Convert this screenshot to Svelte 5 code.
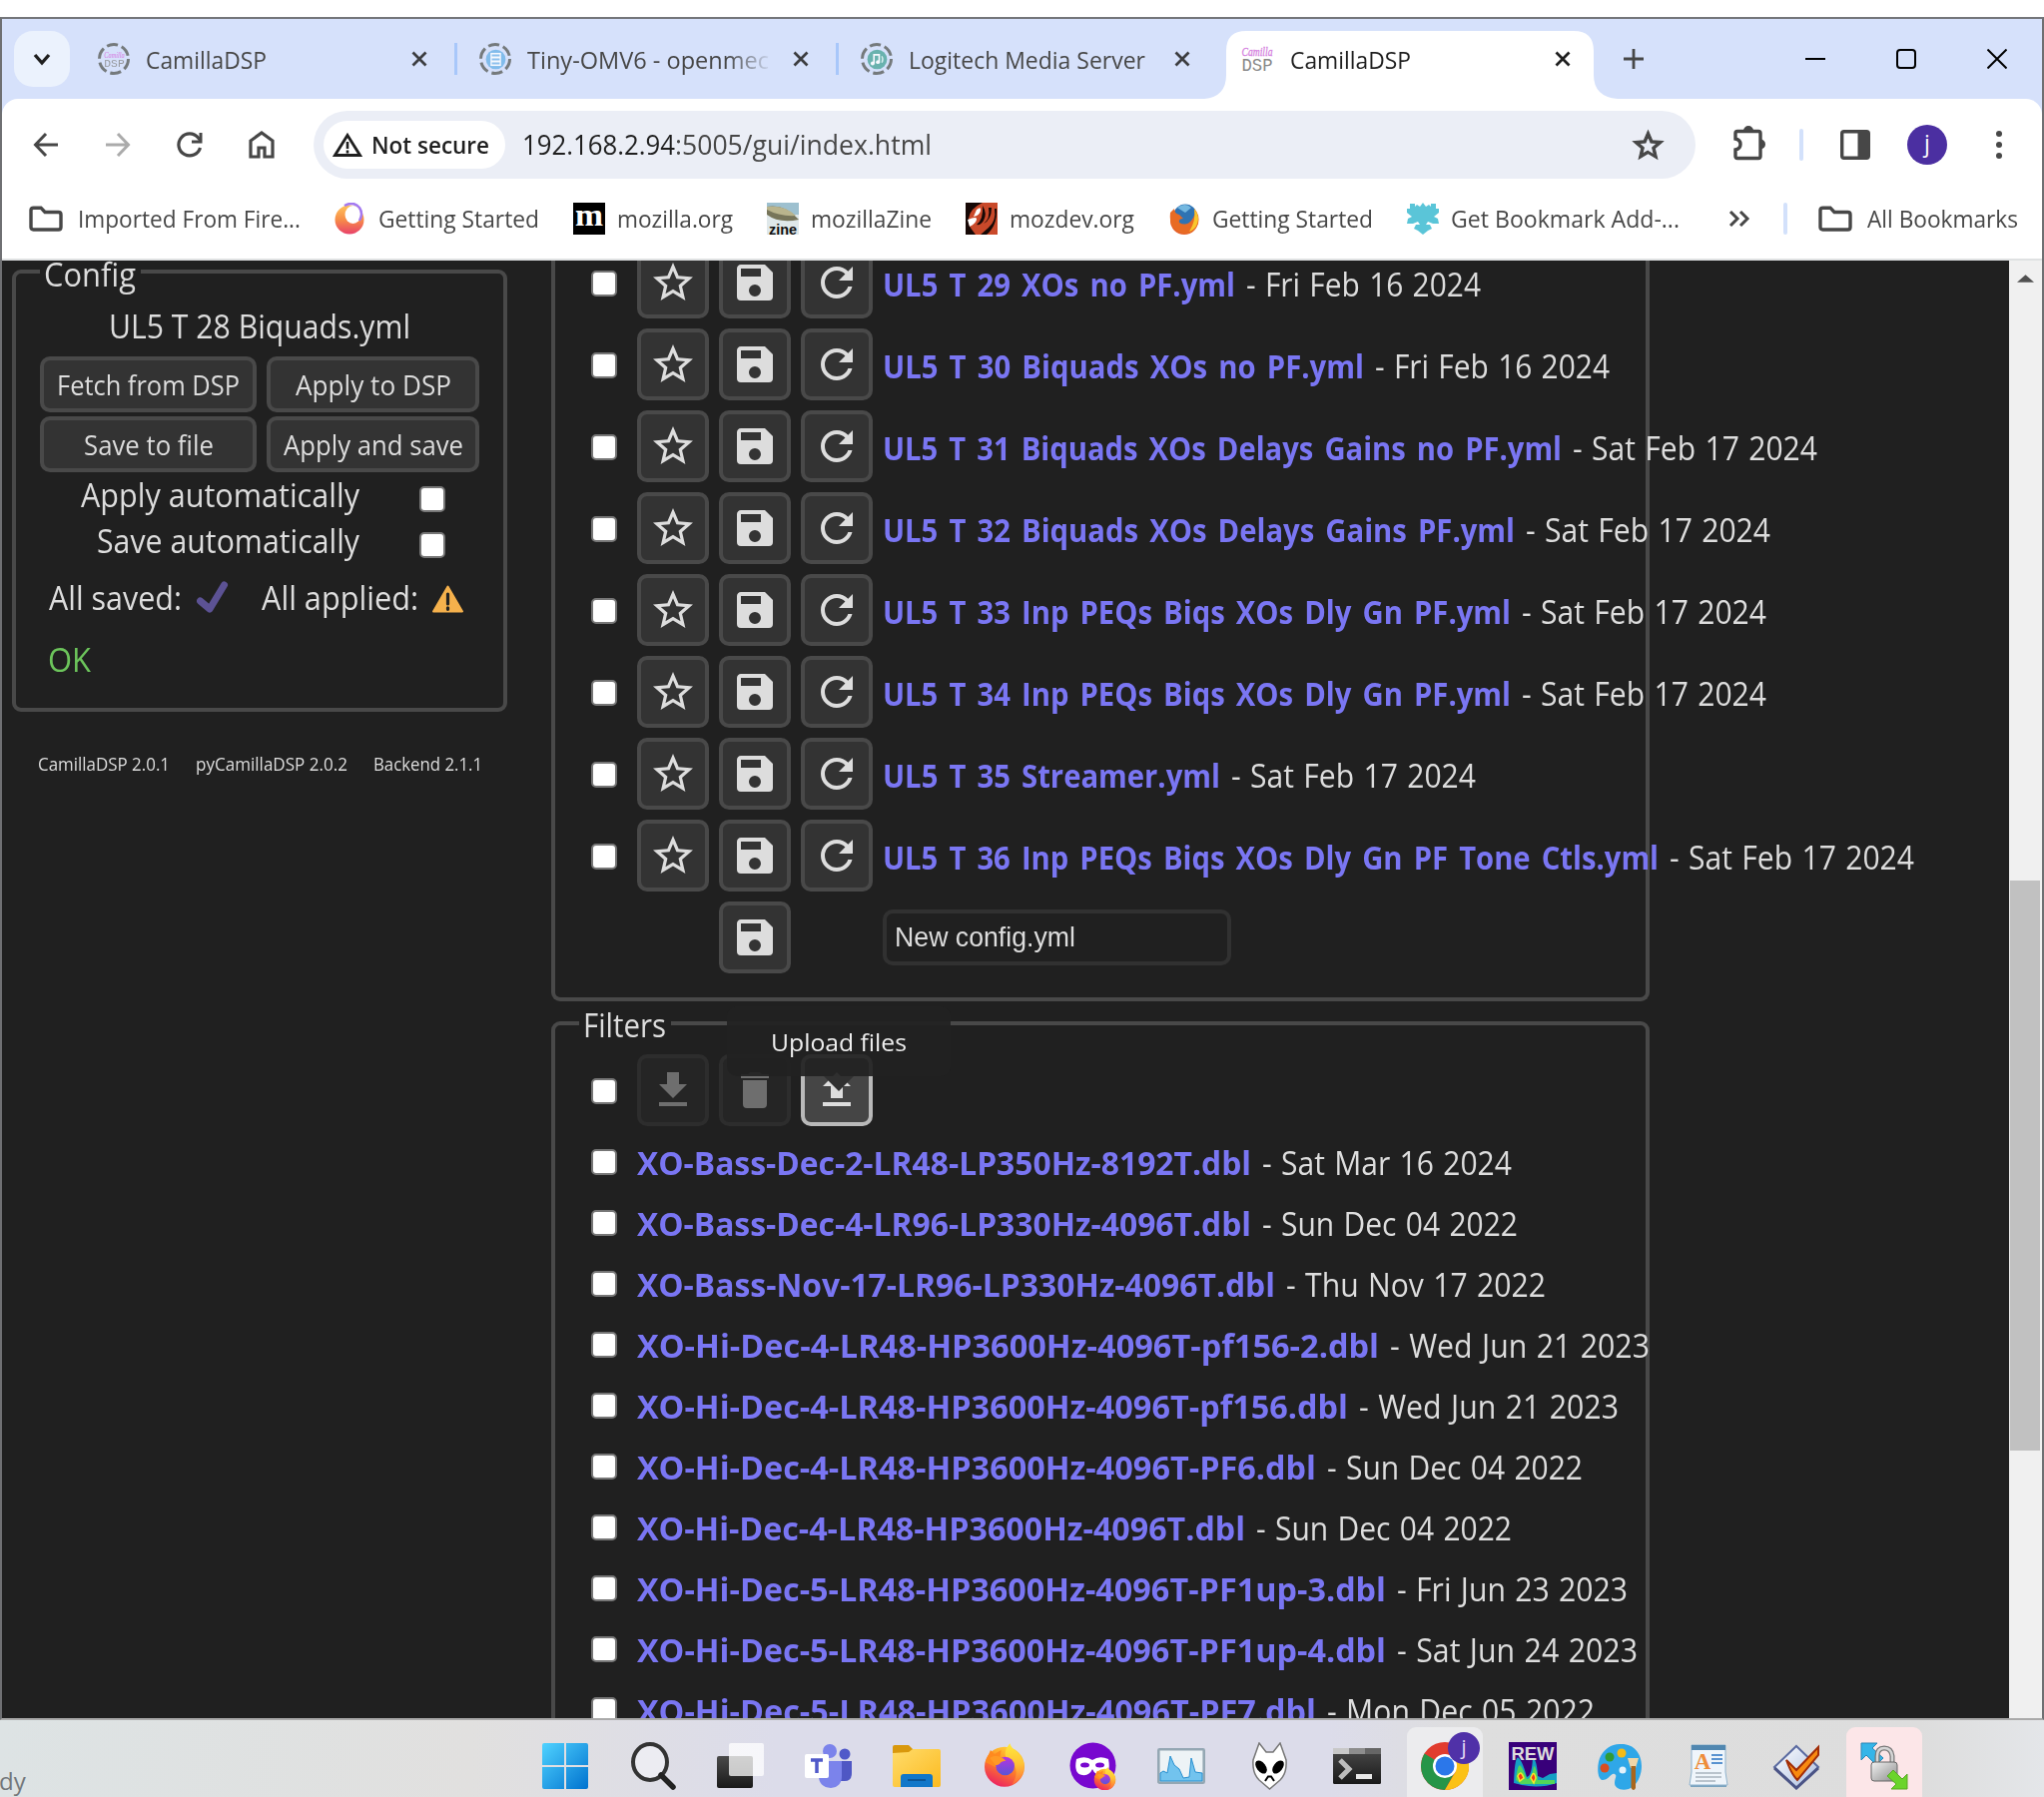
<script>
  // Scales a label horizontally so that it fills its column width.
  function fit(node, width) {
    const natural = node.getBoundingClientRect().width;
    node.style.transform = `scaleX(${width / natural})`;
  }

  const tabs = [
    { title: 'CamillaDSP', w: 121, icon: 'camilla', busy: true },
    { title: 'Tiny-OMV6 - openmec', w: 242, icon: 'omv', busy: true },
    { title: 'Logitech Media Server', w: 237, icon: 'lms', busy: true },
    { title: 'CamillaDSP', w: 121, icon: 'camilla', active: true }
  ];

  const bookmarks = [
    { title: 'Imported From Fire...', w: 223, icon: 'folder' },
    { title: 'Getting Started', w: 161, icon: 'ring' },
    { title: 'mozilla.org', w: 116, icon: 'm' },
    { title: 'mozillaZine', w: 121, icon: 'zine' },
    { title: 'mozdev.org', w: 125, icon: 'dev' },
    { title: 'Getting Started', w: 161, icon: 'fox' },
    { title: 'Get Bookmark Add-...', w: 229, icon: 'snow' }
  ];

  const configs = [
    { name: 'UL5 T 29 XOs no PF.yml', w: 353, date: 'Fri Feb 16 2024', d: 235 },
    { name: 'UL5 T 30 Biquads XOs no PF.yml', w: 482, date: 'Fri Feb 16 2024', d: 235 },
    { name: 'UL5 T 31 Biquads XOs Delays Gains no PF.yml', w: 680, date: 'Sat Feb 17 2024', d: 245 },
    { name: 'UL5 T 32 Biquads XOs Delays Gains PF.yml', w: 633, date: 'Sat Feb 17 2024', d: 245 },
    { name: 'UL5 T 33 Inp PEQs Biqs XOs Dly Gn PF.yml', w: 629, date: 'Sat Feb 17 2024', d: 245 },
    { name: 'UL5 T 34 Inp PEQs Biqs XOs Dly Gn PF.yml', w: 629, date: 'Sat Feb 17 2024', d: 245 },
    { name: 'UL5 T 35 Streamer.yml', w: 338, date: 'Sat Feb 17 2024', d: 245 },
    { name: 'UL5 T 36 Inp PEQs Biqs XOs Dly Gn PF Tone Ctls.yml', w: 777, date: 'Sat Feb 17 2024', d: 245 }
  ];

  const filters = [
    { name: 'XO-Bass-Dec-2-LR48-LP350Hz-8192T.dbl', w: 615, date: 'Sat Mar 16 2024', d: 250 },
    { name: 'XO-Bass-Dec-4-LR96-LP330Hz-4096T.dbl', w: 615, date: 'Sun Dec 04 2022', d: 256 },
    { name: 'XO-Bass-Nov-17-LR96-LP330Hz-4096T.dbl', w: 639, date: 'Thu Nov 17 2022', d: 260 },
    { name: 'XO-Hi-Dec-4-LR48-HP3600Hz-4096T-pf156-2.dbl', w: 743, date: 'Wed Jun 21 2023', d: 260 },
    { name: 'XO-Hi-Dec-4-LR48-HP3600Hz-4096T-pf156.dbl', w: 712, date: 'Wed Jun 21 2023', d: 260 },
    { name: 'XO-Hi-Dec-4-LR48-HP3600Hz-4096T-PF6.dbl', w: 680, date: 'Sun Dec 04 2022', d: 256 },
    { name: 'XO-Hi-Dec-4-LR48-HP3600Hz-4096T.dbl', w: 609, date: 'Sun Dec 04 2022', d: 256 },
    { name: 'XO-Hi-Dec-5-LR48-HP3600Hz-4096T-PF1up-3.dbl', w: 750, date: 'Fri Jun 23 2023', d: 231 },
    { name: 'XO-Hi-Dec-5-LR48-HP3600Hz-4096T-PF1up-4.dbl', w: 750, date: 'Sat Jun 24 2023', d: 241 },
    { name: 'XO-Hi-Dec-5-LR48-HP3600Hz-4096T-PF7.dbl', w: 680, date: 'Mon Dec 05 2022', d: 268 }
  ];

  const paths = {
    star: 'M12,15.39L8.24,17.66L9.23,13.38L5.91,10.5L10.29,10.13L12,6.09L13.71,10.13L18.09,10.5L14.77,13.38L15.76,17.66M22,9.24L14.81,8.63L12,2L9.19,8.63L2,9.24L7.45,13.97L5.82,21L12,17.27L18.18,21L16.54,13.97L22,9.24Z',
    save: 'M15,9H5V5H15M12,19A3,3 0 0,1 9,16A3,3 0 0,1 12,13A3,3 0 0,1 15,16A3,3 0 0,1 12,19M17,3H5C3.89,3 3,3.9 3,5V19A2,2 0 0,0 5,21H19A2,2 0 0,0 21,19V7L17,3Z',
    reload: 'M17.65,6.35C16.2,4.9 14.21,4 12,4A8,8 0 0,0 4,12A8,8 0 0,0 12,20C15.73,20 18.84,17.45 19.73,14H17.65C16.83,16.33 14.61,18 12,18A6,6 0 0,1 6,12A6,6 0 0,1 12,6C13.66,6 15.14,6.69 16.22,7.78L13,11H20V4L17.65,6.35Z',
    download: 'M5,20H19V18H5M19,9H15V3H9V9H5L12,16L19,9Z',
    trash: 'M19,4H15.5L14.5,3H9.5L8.5,4H5V6H19M6,19A2,2 0 0,0 8,21H16A2,2 0 0,0 18,19V7H6V19Z',
    upload: 'M9,16V10H5L12,3L19,10H15V16H9M5,20V18H19V20H5Z'
  };
</script>

{#snippet t(text, w, cls = '')}
  <span class="t {cls}" style:width="{w}px"><span class="in" use:fit={w}>{text}</span></span>
{/snippet}

{#snippet glyph(name)}
  <svg class="glyph" viewBox="0 0 24 24"><path d={paths[name]} fill="currentColor" /></svg>
{/snippet}

{#snippet closeIcon()}
  <svg class="close" viewBox="0 0 16 16"><path d="M1.5 1.5l13 13M14.5 1.5l-13 13" stroke="currentColor" stroke-width="2.8" /></svg>
{/snippet}

{#snippet folderIcon()}
  <svg class="folder" viewBox="0 0 34 26"><path d="M2 4.5Q2 2.2 4.5 2.2H12l4 4.3h13.500Q32 6.500 32 9v12.500q0 2.500-2.500 2.500h-25Q2 24 2 21.500z" fill="none" stroke="#474747" stroke-width="3.400" /></svg>
{/snippet}

{#snippet foxArt()}
  <circle cx="16" cy="17.500" r="15" fill="url(#foxBody)" />
  <path d="M20 0c1 5 9 7 10.500 15 1 8-4 14-9 16 5-7 4-15-2-18-5-3-3-9 .500-13z" fill="url(#foxFlame)" />
  <path d="M1.500 14l4-9 3 3 5-3-1 6 5 3-8 4z" fill="#ff8a1f" />
  <circle cx="16.500" cy="17" r="7" fill="url(#foxGlobe)" />
  <path d="M5 11c4-3 9-1 12 2-5 0-4 4-8 3z" fill="#ff9a25" />
{/snippet}

{#snippet site(icon)}
  <svg class="site" viewBox="0 0 32 32">
    {#if icon === 'camilla'}
      <text x="16" y="13" text-anchor="middle" font-size="12" font-style="italic" font-family="Liberation Serif, serif" textLength="31" lengthAdjust="spacingAndGlyphs" fill="#d57fe0" stroke="#d57fe0" stroke-width=".3">Camilla</text>
      <text x="16" y="27.500" text-anchor="middle" font-size="18" font-family="Liberation Mono, monospace" textLength="31" lengthAdjust="spacingAndGlyphs" fill="#888">DSP</text>
    {:else if icon === 'omv'}
      <circle cx="16" cy="16" r="15" fill="#6db3e8" /><rect x="8" y="6" width="16" height="20" fill="#fff" />
      <path d="M10 10h12M10 16h12M10 22h12" stroke="#7ab9ea" stroke-width="3" />
    {:else if icon === 'lms'}
      <circle cx="16" cy="16" r="15" fill="#4fa79c" />
      <path d="M11 22V9h8v11" stroke="#fff" stroke-width="2.500" fill="none" /><circle cx="9" cy="22" r="3" fill="#fff" /><circle cx="17" cy="20" r="3" fill="#fff" />
      <path d="M23 11q3 5 0 10" stroke="#d7f0ec" stroke-width="2" fill="none" />
    {:else if icon === 'ring'}
      <ellipse cx="15" cy="17" rx="14.500" ry="14.500" fill="url(#ringGrad)" /><ellipse cx="18.500" cy="12" rx="8" ry="9" fill="#fff" />
      <path d="M10 3q9-5 15 2 4 6 0 13" fill="none" stroke="#a479f0" stroke-width="2.500" />
    {:else if icon === 'm'}
      <rect width="32" height="32" fill="#000" /><text x="16" y="23" text-anchor="middle" font-size="31" font-weight="700" font-family="Liberation Serif, serif" fill="#fff" textLength="28" lengthAdjust="spacingAndGlyphs">m</text>
    {:else if icon === 'zine'}
      <rect width="32" height="32" fill="#dfe8ea" /><rect width="32" height="12" fill="#9dc0cf" />
      <path d="M0 4q18-3 32 13-20 4-32-5z" fill="#77755a" /><path d="M0 4q18-2 29 9-16 1-29-6z" fill="#b9b48d" />
      <text x="16" y="31.500" text-anchor="middle" font-size="14" font-weight="700" font-family="Liberation Sans, sans-serif" fill="#111" textLength="28" lengthAdjust="spacingAndGlyphs">zine</text>
    {:else if icon === 'dev'}
      <rect width="32" height="32" fill="#c9492a" /><path d="M0 0h17Q4 6 3 16q-1 6 4 12l3 4H0z" fill="#160806" />
      <path d="M11 7q5-4 4 1t-7 6zM2 17q10-4 9 0t-7 7z" fill="#fff" /><path d="M17 3q5 8 1 15-3 5-7 4 7-5 6-19zM23 5q2 11-5 16 8-4 8-16zM29 6q2 12-6 19l-8 7h6q11-9 10-26z" fill="#160806" />
    {:else if icon === 'fox'}
      <circle cx="16" cy="18" r="14" fill="#e4602a" /><circle cx="17" cy="13" r="11.500" fill="#2f73b3" /><path d="M9 5q8-6 14 0l-6 5z" fill="#74b8e0" />
      <path d="M2 10l4-4q0 5 5 6l4 4q-5 0-4 4 7 4 12-2 5-6 3-12 6 6 4 15-4 11-15 10Q0 27 2 10z" fill="#e86b24" /><path d="M26 6q6 8 3 15-2 6-8 8 7-11 5-23z" fill="#f9c72c" />
    {:else if icon === 'snow'}
      <path d="M16 0l3 4 3-2 2 2V1h5v5h3v4l-5 4 4 2 1 5h-6l-5-2-2 3h4l2 4-4 2-5 4-5-4-4-2 2-4h4l-2-3-5 2H0l1-5 4-2-5-4V6h3V1h5v3l2-2 3 2z" fill="#5ac5d8" />
    {/if}
  </svg>
{/snippet}

<svg class="defs" width="0" height="0">
  <defs>
    <linearGradient id="foxBody" x1=".8" y1="0" x2=".3" y2="1"><stop offset="0" stop-color="#ffe03a" /><stop offset=".5" stop-color="#ff8524" /><stop offset="1" stop-color="#ec1f63" /></linearGradient>
    <linearGradient id="foxFlame" x1="0" y1="0" x2="0" y2="1"><stop offset="0" stop-color="#ffe93c" /><stop offset=".5" stop-color="#ffc235" /><stop offset="1" stop-color="#ff6a3a" /></linearGradient>
    <linearGradient id="foxGlobe" x1="0" y1="0" x2="0" y2="1"><stop offset="0" stop-color="#b833e1" /><stop offset="1" stop-color="#5a55d6" /></linearGradient>
    <linearGradient id="ringGrad" x1="0" y1="0" x2="0" y2="1"><stop offset="0" stop-color="#ffc45c" /><stop offset=".5" stop-color="#f78d48" /><stop offset="1" stop-color="#e8416a" /></linearGradient>
    <linearGradient id="winBlue" x1="0" y1="0" x2="1" y2="1"><stop offset="0" stop-color="#50d3ff" /><stop offset="1" stop-color="#0072cf" /></linearGradient>
    <linearGradient id="yellow" x1="0" y1="0" x2="1" y2="1"><stop offset="0" stop-color="#ffdc6b" /><stop offset="1" stop-color="#fcba20" /></linearGradient>
    <linearGradient id="dark" x1="0" y1="0" x2="0" y2="1"><stop offset="0" stop-color="#4a4a4a" /><stop offset="1" stop-color="#191919" /></linearGradient>
    <linearGradient id="sheet" x1="0" y1="0" x2="1" y2="1"><stop offset="0" stop-color="#fff" /><stop offset="1" stop-color="#a9bce0" /></linearGradient>
    <linearGradient id="steel" x1="0" y1="0" x2="1" y2="1"><stop offset="0" stop-color="#f3f3f3" /><stop offset="1" stop-color="#8c8c8c" /></linearGradient>
  </defs>
</svg>

<div class="screen">
  <div class="window">
    <div class="tabstrip">
      <div class="search-tabs"><svg viewBox="0 0 18 14"><path d="M2 3l7 8 7-8" fill="none" stroke="#1f1f1f" stroke-width="3.400" /></svg></div>
      {#each tabs as tab, i}
        <div class="tab" class:active={tab.active} class:sep={i < 2}>
          {#if tab.active}
            <svg class="tabshape" viewBox="0 0 414 68"><path d="M0 68q22-2 22-24V20Q22 0 42 0h328q20 0 20 20v24q0 22 24 24z" fill="#fff" /></svg>
          {/if}
          <div class="favicon" class:busy={tab.busy}>
            {#if tab.busy}<svg class="dash" viewBox="0 0 32 32"><circle cx="16" cy="16" r="14.500" fill="none" stroke="#757a7c" stroke-width="3" stroke-dasharray="11.200 4" /></svg>{/if}
            {@render site(tab.icon)}
          </div>
          <div class="title" class:faded={i === 1}>{@render t(tab.title, tab.w)}</div>
          {@render closeIcon()}
        </div>
      {/each}
      <svg class="plus" viewBox="0 0 20 20"><path d="M10 0v20M0 10h20" stroke="#474747" stroke-width="2.800" /></svg>
      <div class="controls">
        <svg viewBox="0 0 20 20"><path d="M0 10h20" stroke="#000" stroke-width="2" /></svg>
        <svg viewBox="0 0 20 20"><rect x="1" y="1" width="18" height="18" rx="3" fill="none" stroke="#000" stroke-width="2" /></svg>
        <svg viewBox="0 0 20 20"><path d="M.5 .5l19 19M19.500 .5l-19 19" stroke="#000" stroke-width="2" /></svg>
      </div>
    </div>

    <div class="toolbar">
      <svg class="nav" viewBox="0 0 28 28"><path d="M26 14H4M14 3L3.500 14 14 25" fill="none" stroke="#474747" stroke-width="3" /></svg>
      <svg class="nav" viewBox="0 0 28 28"><path d="M2 14h22M14 3l10.500 11L14 25" fill="none" stroke="#ababab" stroke-width="3" /></svg>
      <svg class="nav" viewBox="0 0 28 28"><path d="M24.500 17A11 11 0 1 1 22.500 7L25 10" fill="none" stroke="#474747" stroke-width="3.200" /><path d="M26.500 2v10.500H16V9.500h7.500V2z" fill="#474747" /></svg>
      <svg class="nav home" viewBox="0 0 28 30"><path d="M3 27V11l11-8 11 8v16h-8v-9h-6v9z" fill="none" stroke="#474747" stroke-width="3.200" /></svg>
      <div class="omnibox">
        <div class="chip">
          <svg viewBox="0 0 30 25"><path d="M15 3.500L27.500 23.500h-25z" fill="none" stroke="#1f1f1f" stroke-width="2.800" /><path d="M15 10v7M15 18.500v3" stroke="#1f1f1f" stroke-width="2.600" /></svg>
          {@render t('Not secure', 118, 'semi')}
        </div>
        <div class="url">{@render t('192.168.2.94', 153, 'host')}{@render t(':5005/gui/index.html', 257)}</div>
        <svg class="bmstar" viewBox="1 1 22 21"><path d={paths.star} fill="#474747" stroke="#474747" stroke-width=".7" /></svg>
      </div>
      <svg class="ext" viewBox="0 0 34 36"><path d="M4 8.500q0-2 2-2h21q2 0 2 2v23q0 2-2 2H6q-2 0-2-2V25q5-1 5-5.500T4 14z" fill="none" stroke="#474747" stroke-width="3.400" /><path d="M12 6a5 5 0 0 1 10 0zM29 14.500a5 5 0 0 1 0 10z" fill="#474747" /></svg>
      <i class="bar"></i>
      <svg class="panel" viewBox="0 0 30 30"><rect x="1.700" y="1.700" width="26.600" height="26.600" rx="2" fill="none" stroke="#474747" stroke-width="3.400" /><path d="M17.500 2H28v26H17.500z" fill="#474747" /></svg>
      <div class="avatar">j</div>
      <svg class="dots" viewBox="0 0 8 30"><circle cx="4" cy="4" r="3" /><circle cx="4" cy="15" r="3" /><circle cx="4" cy="26" r="3" /></svg>
    </div>

    <div class="bookmarks">
      {#each bookmarks as b}
        <div class="bm">
          {#if b.icon === 'folder'}{@render folderIcon()}{:else}{@render site(b.icon)}{/if}
          {@render t(b.title, b.w)}
        </div>
      {/each}
      <svg class="more" viewBox="0 0 22 16"><path d="M2 1l7 7-7 7M12 1l7 7-7 7" fill="none" stroke="#474747" stroke-width="3" /></svg>
      <i class="bar"></i>
      <div class="bm">{@render folderIcon()}{@render t('All Bookmarks', 151)}</div>
    </div>

    <div class="page">
      <aside>
        <section class="box config">
          <div class="legend">{@render t('Config', 92)}</div>
          <div class="current">{@render t('UL5 T 28 Biquads.yml', 302)}</div>
          <div class="actions">
            <button>{@render t('Fetch from DSP', 183)}</button>
            <button>{@render t('Apply to DSP', 156)}</button>
            <button>{@render t('Save to file', 130)}</button>
            <button>{@render t('Apply and save', 180)}</button>
          </div>
          <div class="auto">{@render t('Apply automatically', 279)}<i class="check"></i></div>
          <div class="auto">{@render t('Save automatically', 263)}<i class="check"></i></div>
          <div class="status">
            {@render t('All saved:', 133)}
            <svg class="tick" viewBox="0 0 32 32"><path d="M3.500 20L13 28 27.500 4" fill="none" stroke="#5c5294" stroke-width="7" stroke-linecap="round" stroke-linejoin="round" /></svg>
            {@render t('All applied:', 157)}
            <svg class="warn" viewBox="0 0 32 28"><path d="M16 1.500L30.500 26.500h-29z" fill="#f5b14c" stroke="#f5b14c" stroke-width="2" stroke-linejoin="round" /><path d="M16 9v10M16 22.800v1.500" stroke="#222" stroke-width="3.200" stroke-linecap="round" /></svg>
          </div>
          <div class="ok">{@render t('OK', 43)}</div>
        </section>
        <footer>{@render t('CamillaDSP 2.0.1', 132)}{@render t('pyCamillaDSP 2.0.2', 152)}{@render t('Backend 2.1.1', 109)}</footer>
      </aside>

      <main>
        <section class="box files">
          {#each configs as c}
            <div class="row">
              <i class="check"></i>
              <button class="sq">{@render glyph('star')}</button>
              <button class="sq">{@render glyph('save')}</button>
              <button class="sq">{@render glyph('reload')}</button>
              <div class="entry">{@render t(c.name, c.w, 'name')}{@render t('- ' + c.date, c.d)}</div>
            </div>
          {/each}
          <div class="row">
            <span></span><span></span>
            <button class="sq">{@render glyph('save')}</button>
            <span></span>
            <div class="input">{@render t('New config.yml', 181)}</div>
          </div>
        </section>

        <section class="box filters">
          <div class="legend">{@render t('Filters', 83)}</div>
          <div class="row head">
            <i class="check"></i>
            <button class="sq off">{@render glyph('download')}</button>
            <button class="sq off">{@render glyph('trash')}</button>
            <button class="sq hot">{@render glyph('upload')}
              <div class="tip">{@render t('Upload files', 136)}</div>
            </button>
          </div>
          <div class="list">
            {#each filters as f}
              <div class="frow"><i class="check"></i>{@render t(f.name, f.w, 'name')}{@render t('- ' + f.date, f.d)}</div>
            {/each}
          </div>
        </section>
      </main>

      <div class="scrollbar">
        <svg viewBox="0 0 18 8"><path d="M0 8l9-8 9 8z" fill="#505050" /></svg>
        <div class="thumb"></div>
      </div>
    </div>
  </div>

  <div class="taskbar">
    <span class="partial">dy</span>
    <div class="apps">
      <div class="app"><svg viewBox="0 0 48 48"><path d="M3 1h20v22H1V3q0-2 2-2zM25 1h20q2 0 2 2v20H25zM1 25h22v22H3q-2 0-2-2zM25 25h22v20q0 2-2 2H25z" fill="url(#winBlue)" /></svg></div>
      <div class="app"><svg viewBox="0 0 48 48"><ellipse cx="21" cy="20" rx="17" ry="18" fill="#ececf2" stroke="#333" stroke-width="4" /><path d="M32 33l12 12" stroke="#222" stroke-width="5.500" stroke-linecap="round" /></svg></div>
      <div class="app"><svg viewBox="0 0 48 48"><rect x="0" y="14" width="36" height="32" rx="2" fill="url(#dark)" /><rect x="12" y="1" width="35" height="33" rx="2" fill="#fff" fill-opacity=".75" /></svg></div>
      <div class="app"><svg viewBox="0 0 48 48"><circle cx="40" cy="12" r="5.500" fill="#5059c9" /><path d="M32 19h15v12q0 8-7 8h-8z" fill="#4f57c4" /><circle cx="25" cy="9" r="7" fill="#7b83eb" /><path d="M14 19h23v15q0 11-11 12-12-1-12-12z" fill="#7b83eb" /><rect x="0" y="12" width="24" height="24" rx="2" fill="#fff" /><path d="M6 18h12M12 18v13" stroke="#5059c9" stroke-width="3.500" /></svg></div>
      <div class="app"><svg viewBox="0 0 48 48"><path d="M0 5q0-2 2-2h14l4 4v10H0z" fill="#d9980c" /><path d="M0 11l16-1 4-3h26q2 0 2 2v34q0 2-2 2H2q-2 0-2-2z" fill="url(#yellow)" /><path d="M8 45V35q0-3 3-3h26q3 0 3 3v10z" fill="#1177c9" /><path d="M15 38h18" stroke="#0b5596" stroke-width="2" /></svg></div>
      <div class="app"><svg viewBox="-2 -1 36 36">{@render foxArt()}</svg></div>
      <div class="app"><svg viewBox="0 0 48 48"><circle cx="23.500" cy="23.500" r="23" fill="#7808cf" /><path d="M7 17q9-4 16 1 7-5 16-1 3 15-6 16-7 1-10-6-3 7-10 6-9-1-6-16z" fill="#fff" /><ellipse cx="15.500" cy="23" rx="4.500" ry="2.500" fill="#7808cf" /><ellipse cx="30.500" cy="23" rx="4.500" ry="2.500" fill="#7808cf" /><g transform="translate(24 25) scale(.72)">{@render foxArt()}</g></svg></div>
      <div class="app"><svg viewBox="0 0 48 48"><rect x="1.300" y="7.300" width="45.400" height="33.400" rx="1" fill="#edf3f6" stroke="#94a7b3" stroke-width="2.600" /><path d="M3 31l3-2 4 2 3-17 4 9 5 4 4 9 6-1 2-19 4 14 7 1v8H3z" fill="#72c3ee" stroke="#278fd0" /></svg></div>
      <div class="app"><svg viewBox="0 0 48 48"><path d="M14 1l7 9h7l7-9 6 17q1 13-6 20l-10.500 9L14 38q-7-7-6-20z" fill="#fff" stroke="#777" stroke-width="1.500" /><ellipse cx="16" cy="25" rx="4.500" ry="7.500" transform="rotate(-38 16 25)" fill="#000" /><ellipse cx="33" cy="25" rx="4.500" ry="7.500" transform="rotate(38 33 25)" fill="#000" /><path d="M20 39l3-4.500h3l3 4.500" stroke="#000" stroke-width="2" fill="none" /></svg></div>
      <div class="app"><svg viewBox="0 0 48 48"><rect y="6" width="48" height="36" rx="1.500" fill="url(#dark)" /><path d="M0 6h16v6H0z" fill="#c8c8c8" /><path d="M16 6h16v6H16z" fill="#8d8d8d" /><path d="M32 6h16v6H32z" fill="#666" /><path d="M7 18l9 9-9 9" fill="none" stroke="#bdbdbd" stroke-width="5" /><path d="M23 34.500h16" stroke="#e8e8e8" stroke-width="5" /></svg></div>
      <div class="app lit"><svg viewBox="0 0 48 48"><circle cx="24" cy="24" r="24" fill="#e13c2e" /><path d="M24 24L3.500 11.500A24 24 0 0 0 24 48l10-18z" fill="#269548" /><path d="M24 13h21.500A24 24 0 0 1 24 48l10.500-18z" fill="#fbc116" /><circle cx="24" cy="24" r="12" fill="#fff" /><circle cx="24" cy="24" r="9.500" fill="#2b77ea" /></svg><span class="badge">j</span></div>
      <div class="app"><svg viewBox="0 0 48 48"><rect width="48" height="48" fill="#38007a" /><path d="M5 41q1-29 5-25t8 19q5-1 6-19 4 1 5 18l5 2 7-4 7-1v10q-20 7-43 0z" fill="#159fc4" /><path d="M7 38q2-18 5-14t6 13q5 0 7-13 3 1 4 14h17v4H12z" fill="#53d65a" /><path d="M9 34q3-7 6 2l-4 3zM22 36q3-9 5 0l-2 5z" fill="#f13a1a" stroke="#f6e72b" stroke-width="1.500" /><text x="24" y="17.500" text-anchor="middle" font-family="Liberation Sans, sans-serif" font-size="18" font-weight="700" fill="#ddd" textLength="43" lengthAdjust="spacingAndGlyphs">REW</text></svg></div>
      <div class="app"><svg viewBox="0 0 48 48"><path d="M23 2c14-1 22 9 22 22 0 10-5 20-13 23-8 2-14-1-14-6s3-7 0-9-6 6-12 6C0 38 0 21 4 14 8 7 14 2 23 2z" fill="#2fa7e8" /><circle cx="13" cy="15" r="4.500" fill="#2f9b35" /><circle cx="25" cy="11" r="4.500" fill="#f5bb16" /><circle cx="8" cy="26" r="4.500" fill="#d84e22" /><circle cx="26" cy="28" r="3.500" fill="#e3f2fb" /><path d="M31 16h11l-3 10h-5z" fill="#efd6a8" /><path d="M34.500 24h4.500v22q-2 4-4.500 0z" fill="#a9661d" /></svg></div>
      <div class="app"><svg viewBox="0 0 48 48"><path d="M6 40h36v5H6z" fill="#7aa3bf" /><path d="M7 3h34v27l2 13H5l2-13z" fill="#eff5fb" stroke="#8fb2cc" /><path d="M7 3h34v5H7z" fill="#5187b0" /><text x="18" y="27" text-anchor="middle" font-family="Liberation Serif, serif" font-size="23" font-weight="700" fill="#ee8d3a">A</text><path d="M27 13h11M27 17h11M27 21h11" stroke="#5a93d0" stroke-width="2" /><path d="M11 31h26M11 35h26M11 39h20" stroke="#a9b4be" stroke-width="1.500" /></svg></div>
      <div class="app"><svg viewBox="0 0 48 48"><path d="M24 4l22 21-22 21L2 25z" fill="url(#sheet)" stroke="#5a6aa0" stroke-width="2" /><path d="M2 26l22 20 22-20" fill="none" stroke="#4b5486" stroke-width="3" /><path d="M14 18l10 10L46 5v8L25 38q-6-6-11-20z" fill="#f88a10" stroke="#a12d08" stroke-width="2" /></svg></div>
      <div class="app alert"><svg viewBox="0 0 48 48"><path d="M1 1h16l-5 5 11 10-7 7L6 13l-5 5z" fill="#35b5e8" stroke="#2a86b5" /><path d="M17 23v-9q0-8 7-8t8 8v9" fill="none" stroke="#777" stroke-width="5" /><path d="M17 23v-9q0-8 7-8t8 8v9" fill="none" stroke="#d5d5d5" stroke-width="2.500" /><rect x="11" y="20" width="26" height="19" rx="3" fill="url(#steel)" stroke="#666" /><path d="M47 47H31l5-5-9-8 6-6 9 9 5-5z" fill="#6bd42b" stroke="#58a823" /></svg></div>
    </div>
  </div>
</div>

<style>
  :global(body) { background: #fff; overflow: hidden; }
  .defs { position: absolute; }
  .screen { width: 2047px; height: 1800px; overflow: hidden; box-sizing: border-box; padding-top: 17px; font-family: 'Open Sans', 'Noto Sans', sans-serif; display: flex; flex-direction: column; }
  .screen :global(*) { box-sizing: border-box; }
  svg { display: block; flex: none; }
  .window { height: 1706px; border: 2px solid #77797d; border-color: #74767b #6f7073 #aaa; display: flex; flex-direction: column; overflow: hidden; background: #d6e1fb; }
  .t { display: inline-block; white-space: pre; flex: none; }
  .in { display: inline-block; transform-origin: 0 50%; }

  .tabstrip { height: 80px; display: flex; flex: none; align-items: center; font-size: 24px; color: #474747; }
  .search-tabs { width: 56px; height: 56px; margin: 0 6px 0 12px; border-radius: 19px; background: #ebf2fd; display: grid; place-items: center; }
  .search-tabs svg { width: 18px; height: 14px; }
  .tab { width: 382px; height: 80px; display: flex; align-items: center; padding-left: 22px; position: relative; flex: none; }
  .tab.sep { background: linear-gradient(#a8c7fa, #a8c7fa) right -1px center / 4px 32px no-repeat; }
  .tab .close { width: 16px; height: 16px; color: #3c3d40; position: relative; }
  .tab.active, .tab.active .close { color: #1f1f1f; }
  .tab.active .close { margin-left: -1px; }
  .tabshape { position: absolute; left: -16px; bottom: 0; width: 414px; height: 68px; }
  .favicon { width: 32px; height: 32px; position: relative; margin-right: 16px; display: grid; place-items: center; flex: none; }
  .active .favicon { left: -1px; }
  .dash { position: absolute; inset: 0; width: 32px; height: 32px; }
  .site { width: 32px; height: 32px; }
  .busy .site { width: 21px; height: 21px; opacity: .8; }
  .title { width: 250px; margin-right: 16px; flex: none; position: relative; height: 40px; line-height: 40px; padding-top: 1px; }
  .faded { mask-image: linear-gradient(90deg, #000 200px, transparent 246px); }
  .plus { width: 20px; height: 20px; margin-left: 22px; }
  .controls { display: flex; gap: 71px; margin-left: auto; margin-right: 35px; }
  .controls svg { width: 20px; height: 20px; }

  .toolbar { height: 92px; flex: none; background: #fff; border-radius: 16px 16px 0 0; display: flex; align-items: center; padding-left: 30px; }
  .nav { width: 28px; height: 28px; margin-right: 44px; }
  .home { height: 30px; margin-right: 38px; }
  .omnibox { width: 1384px; height: 68px; border-radius: 34px; background: #ebeef6; display: flex; align-items: center; padding-left: 10px; }
  .chip { width: 182px; height: 48px; border-radius: 24px; background: #fff; display: flex; align-items: center; padding-left: 9px; gap: 9px; font-size: 24px; font-weight: 600; color: #1f1f1f; line-height: 40px; padding-bottom: 1px; }
  .chip svg { width: 30px; height: 25px; }
  .url { font-size: 27px; color: #474747; margin-left: 17px; display: flex; line-height: 40px; }
  .host { color: #1f1f1f; }
  .bmstar { width: 33px; height: 32px; margin-left: auto; margin-right: 31px; }
  .ext { width: 34px; height: 36px; margin-left: 36px; margin-top: -5px; }
  .bar { width: 4px; height: 32px; background: #d3e1fb; flex: none; border-radius: 2px; }
  .toolbar .bar { margin: 0 37px 0 34px; }
  .panel { width: 30px; height: 30px; }
  .avatar { width: 40px; height: 40px; border-radius: 50%; background: #4b2fa1; color: #fff; margin-left: 37px; text-align: center; font-size: 23px; line-height: 36px; }
  .dots { width: 8px; height: 30px; margin-left: 48px; fill: #474747; }

  .bookmarks { height: 70px; flex: none; background: #fff; border-bottom: 2px solid #dfe1e2; display: flex; align-items: center; padding: 0 0 13px 27px; font-size: 24px; line-height: 40px; color: #474747; gap: 34px; }
  .bm { display: flex; align-items: center; gap: 12px; flex: none; height: 40px; }
  .bm .t { margin: 0 0 0 -1px; }
  .bm .site { margin-right: 1px; }
  .folder { width: 34px; height: 26px; margin-right: 4px; }
  .more { width: 22px; height: 16px; margin-left: 15px; }
  .bookmarks .bar { margin: 0 -3px 0 -1px; }

  .page { flex: 1; min-height: 0; background: #202020; display: flex; overflow: hidden; color: #ddd; font-size: 32px; line-height: 46px; }
  aside { width: 550px; padding: 9px 0 0 10px; flex: none; }
  .box { border: 4px solid #494949; border-radius: 9px; }
  .config { width: 496px; height: 443px; }
  .legend { height: 40px; line-height: 40px; margin: -21px 0 0 24px; background: #202020; padding: 1px 5px 0 4px; width: max-content; }
  .config .legend { padding-top: 2px; }
  .current { margin-top: 11px; padding: 0 0 0 93px; height: 46px; }
  .actions { display: grid; grid-template-columns: 217px 213px; gap: 4px 10px; grid-auto-rows: 56px; margin: 7px 0 0 24px; }
  button { font: inherit; font-size: 27px; line-height: 44px; color: #ddd; background: #333; border: 4px solid #494949; border-radius: 10px; padding: 2px 0 0; margin: 0; display: flex; align-items: center; justify-content: center; }
  .auto { height: 46px; display: flex; justify-content: flex-end; align-items: center; gap: 60px; padding-right: 58px; }
  .actions + .auto { margin-top: -1px; }
  .auto .t { margin-top: 2px; }
  .auto .check { margin-top: 9px; }
  .check { width: 26px; height: 26px; background: #fff; border: 2px solid #767676; border-radius: 5px; flex: none; }
  .status { margin-top: 9px; height: 46px; display: flex; align-items: center; padding-left: 33px; }
  .status .t { margin-top: 5px; }
  .tick { width: 32px; height: 32px; margin: 4px 33px 0 15px; }
  .warn { width: 33px; height: 28px; margin: 8px 0 0 13px; }
  .ok { margin-top: 19px; padding-left: 32px; color: #6cc45b; }
  footer { display: flex; font-size: 18px; line-height: 30px; gap: 26px; margin: 37px 0 0 26px; }

  main { width: 1460px; flex: none; }
  .files { width: 1100px; height: 762px; margin-top: -20px; border-top: 0; padding: 6px 0 0 36px; display: flex; flex-direction: column; gap: 10px; }
  .row { display: grid; grid-template-columns: 26px 82px 72px 72px auto; column-gap: 10px; height: 72px; align-items: center; flex: none; justify-content: start; }
  .row > :first-child { margin-right: -10px; }
  .row > :nth-child(2) { margin-left: 10px; }
  .row .check { margin-top: 2px; }
  .sq { width: 72px; height: 72px; padding: 0; position: relative; }
  .glyph { width: 48px; height: 48px; }
  .entry { display: flex; gap: 11px; padding-top: 4px; word-spacing: .05em; }
  .name { color: #7a76f3; font-weight: 700; }
  .entry .name { word-spacing: .12em; }
  .input { width: 349px; height: 56px; border: 4px solid #313131; border-radius: 10px; padding: 1px 0 0 8px; font-family: 'Liberation Sans', sans-serif; font-size: 28px; line-height: 46px; }
  .filters { width: 1100px; height: 760px; margin-top: 20px; }
  .head { margin: 10px 0 0 36px; }
  .off { color: #6e6e6e; background: #252525; border-color: #2d2d2d; }
  .hot { background: #454545; border-color: #b9b9b9; }
  .tip { position: absolute; left: -78px; top: -52px; width: 224px; height: 70px; border-radius: 10px; background: rgba(33, 33, 33, .93); padding: 16px 0 0 44px; font-size: 24px; line-height: 40px; text-align: left; color: #eee; }
  .tip::after { content: ''; position: absolute; left: 97px; top: 70px; border: 15px solid transparent; border-top-color: #303030; border-bottom: 0; }
  .list { margin: 6px 0 0 36px; }
  .frow { display: flex; align-items: center; height: 61px; padding-bottom: 1px; word-spacing: .05em; }
  .frow .t { margin-top: 1px; }
  .frow .name { margin: 1px 11px 0 20px; }

  .scrollbar { width: 33px; background: #f0f0f0; margin-left: auto; padding: 14px 2px 0 1px; display: flex; flex-direction: column; align-items: center; flex: none; }
  .scrollbar svg { width: 17px; height: 8px; }
  .thumb { width: 30px; height: 571px; margin-top: 599px; background: #c1c1c1; }

  .taskbar { height: 77px; flex: none; background: linear-gradient(90deg, #dde3e4 0, #e1e0df 23%, #dcdcea 38%, #dcdcea 65%, #dedede 72%, #dddddd 94%, #e4e6e9 100%); display: flex; }
  .partial { font-size: 24px; line-height: 30px; color: #73777b; width: 529px; padding-top: 46px; margin-left: -1px; }
  .apps { display: flex; gap: 12.1px; padding-top: 7px; }
  .app { width: 76px; height: 72px; display: flex; justify-content: center; padding-top: 15px; position: relative; border-radius: 9px 9px 0 0; flex: none; }
  .app svg { width: 48px; height: 48px; }
  .lit { background: #ececee; }
  .alert { background: #fce6e8; }
  .badge { position: absolute; right: 3px; top: 5px; width: 32px; height: 32px; border-radius: 50%; background: #5031a8; color: #e6ddf7; text-align: center; font-size: 20px; line-height: 29px; }
</style>
